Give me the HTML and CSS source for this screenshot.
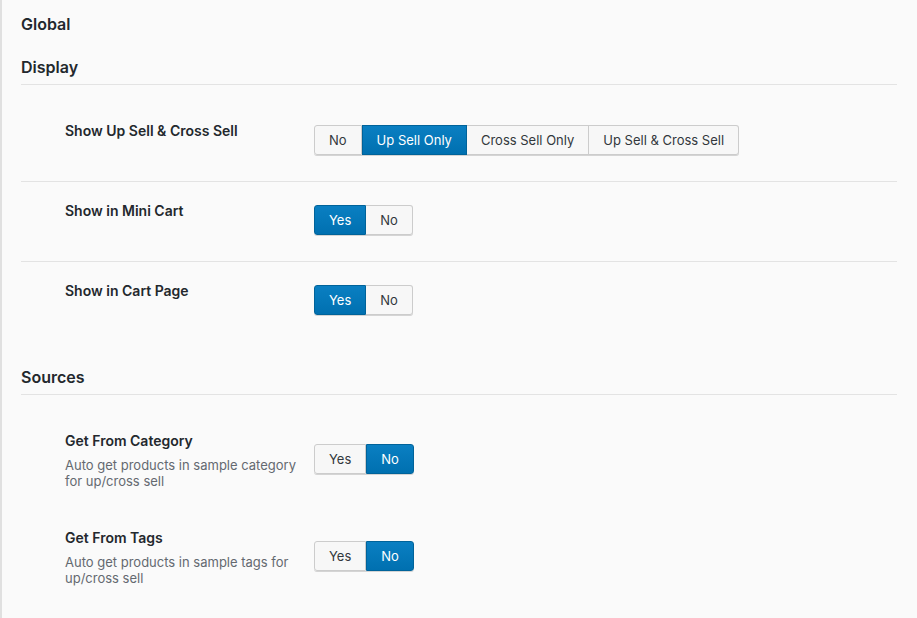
FILE: index.html
```html
<!DOCTYPE html>
<html lang="en">
<head>
<meta charset="utf-8">
<title>Settings</title>
<link rel="stylesheet" href="styles.css">
</head>
<body>
<div class="page">
  <h2 class="title">Global</h2>

  <h3 class="section-title">Display</h3>
  <div class="table">
    <div class="row">
      <div class="label"><div class="label-name">Show Up Sell &amp; Cross Sell</div></div>
      <div class="btn-group">
        <button class="btn">No</button>
        <button class="btn active">Up Sell Only</button>
        <button class="btn">Cross Sell Only</button>
        <button class="btn">Up Sell &amp; Cross Sell</button>
      </div>
    </div>
    <div class="row">
      <div class="label"><div class="label-name">Show in Mini Cart</div></div>
      <div class="btn-group">
        <button class="btn active">Yes</button>
        <button class="btn">No</button>
      </div>
    </div>
    <div class="row">
      <div class="label"><div class="label-name">Show in Cart Page</div></div>
      <div class="btn-group">
        <button class="btn active">Yes</button>
        <button class="btn">No</button>
      </div>
    </div>
  </div>

  <h3 class="section-title sources">Sources</h3>
  <div class="table table-desc">
    <div class="row">
      <div class="label">
        <div class="label-name">Get From Category</div>
        <div class="label-desc">Auto get products in sample category for up/cross sell</div>
      </div>
      <div class="btn-group">
        <button class="btn">Yes</button>
        <button class="btn active">No</button>
      </div>
    </div>
    <div class="row">
      <div class="label">
        <div class="label-name">Get From Tags</div>
        <div class="label-desc">Auto get products in sample tags for up/cross sell</div>
      </div>
      <div class="btn-group">
        <button class="btn">Yes</button>
        <button class="btn active">No</button>
      </div>
    </div>
  </div>
</div>
</body>
</html>
```

FILE: styles.css
```css
* { box-sizing: border-box; }
html, body { margin: 0; padding: 0; }
body {
  background: #fafafa;
  font-family: Inter, "Noto Sans", "Liberation Sans", sans-serif;
  color: #23282d;
  height: 618px;
  overflow: hidden;
}
.page {
  min-height: 618px;
  border-left: 2px solid #e0e0e0;
  padding: 14px 20px 0 19px;
}
.title {
  margin: 0;
  font-size: 16px;
  line-height: 20px;
  font-weight: 600;
}
.section-title {
  margin: 23px 0 0;
  font-size: 16px;
  line-height: 20px;
  font-weight: 600;
  padding-bottom: 7px;
  border-bottom: 1px solid #e3e3e3;
}
.section-title.sources { margin-top: 26px; }
.table { margin-top: 17px; }
.row {
  display: flex;
  align-items: flex-start;
  padding: 20px 0 26px 44px;
  border-bottom: 1px solid #e3e3e3;
}
.row:last-child { border-bottom: none; }
.label {
  width: 249px;
  flex: none;
}
.label-name {
  font-size: 14px;
  line-height: 18px;
  font-weight: 600;
  color: #23282d;
}
.label-desc {
  margin-top: 7px;
  width: 238px;
  font-size: 13px;
  line-height: 16px;
  color: #646970;
}
.row .btn-group { margin-top: 3px; }
.table-desc .row {
  padding: 20px 0 20px 44px;
  border-bottom: none;
}
.table-desc .row .btn-group { margin-top: 12px; }
.btn-group {
  display: flex;
  border-radius: 3px;
  box-shadow: 0 1px 0 #d4d4d4;
}
.btn {
  font-family: inherit;
  font-size: 13px;
  height: 30px;
  line-height: 28px;
  padding: 0 14px;
  margin: 0;
  background: #f7f7f7;
  color: #32373c;
  border: 1px solid #cccccc;
  border-left-width: 0;
  border-radius: 0;
  cursor: pointer;
}
.btn:first-child {
  border-left-width: 1px;
  border-radius: 3px 0 0 3px;
}
.btn:last-child { border-radius: 0 3px 3px 0; }
.btn.active {
  background: linear-gradient(#0a7fc2, #0070b0);
  border-color: #00639a;
  border-left-width: 1px;
  color: #fff;
}
.btn.active + .btn { border-left-width: 0; }
```
